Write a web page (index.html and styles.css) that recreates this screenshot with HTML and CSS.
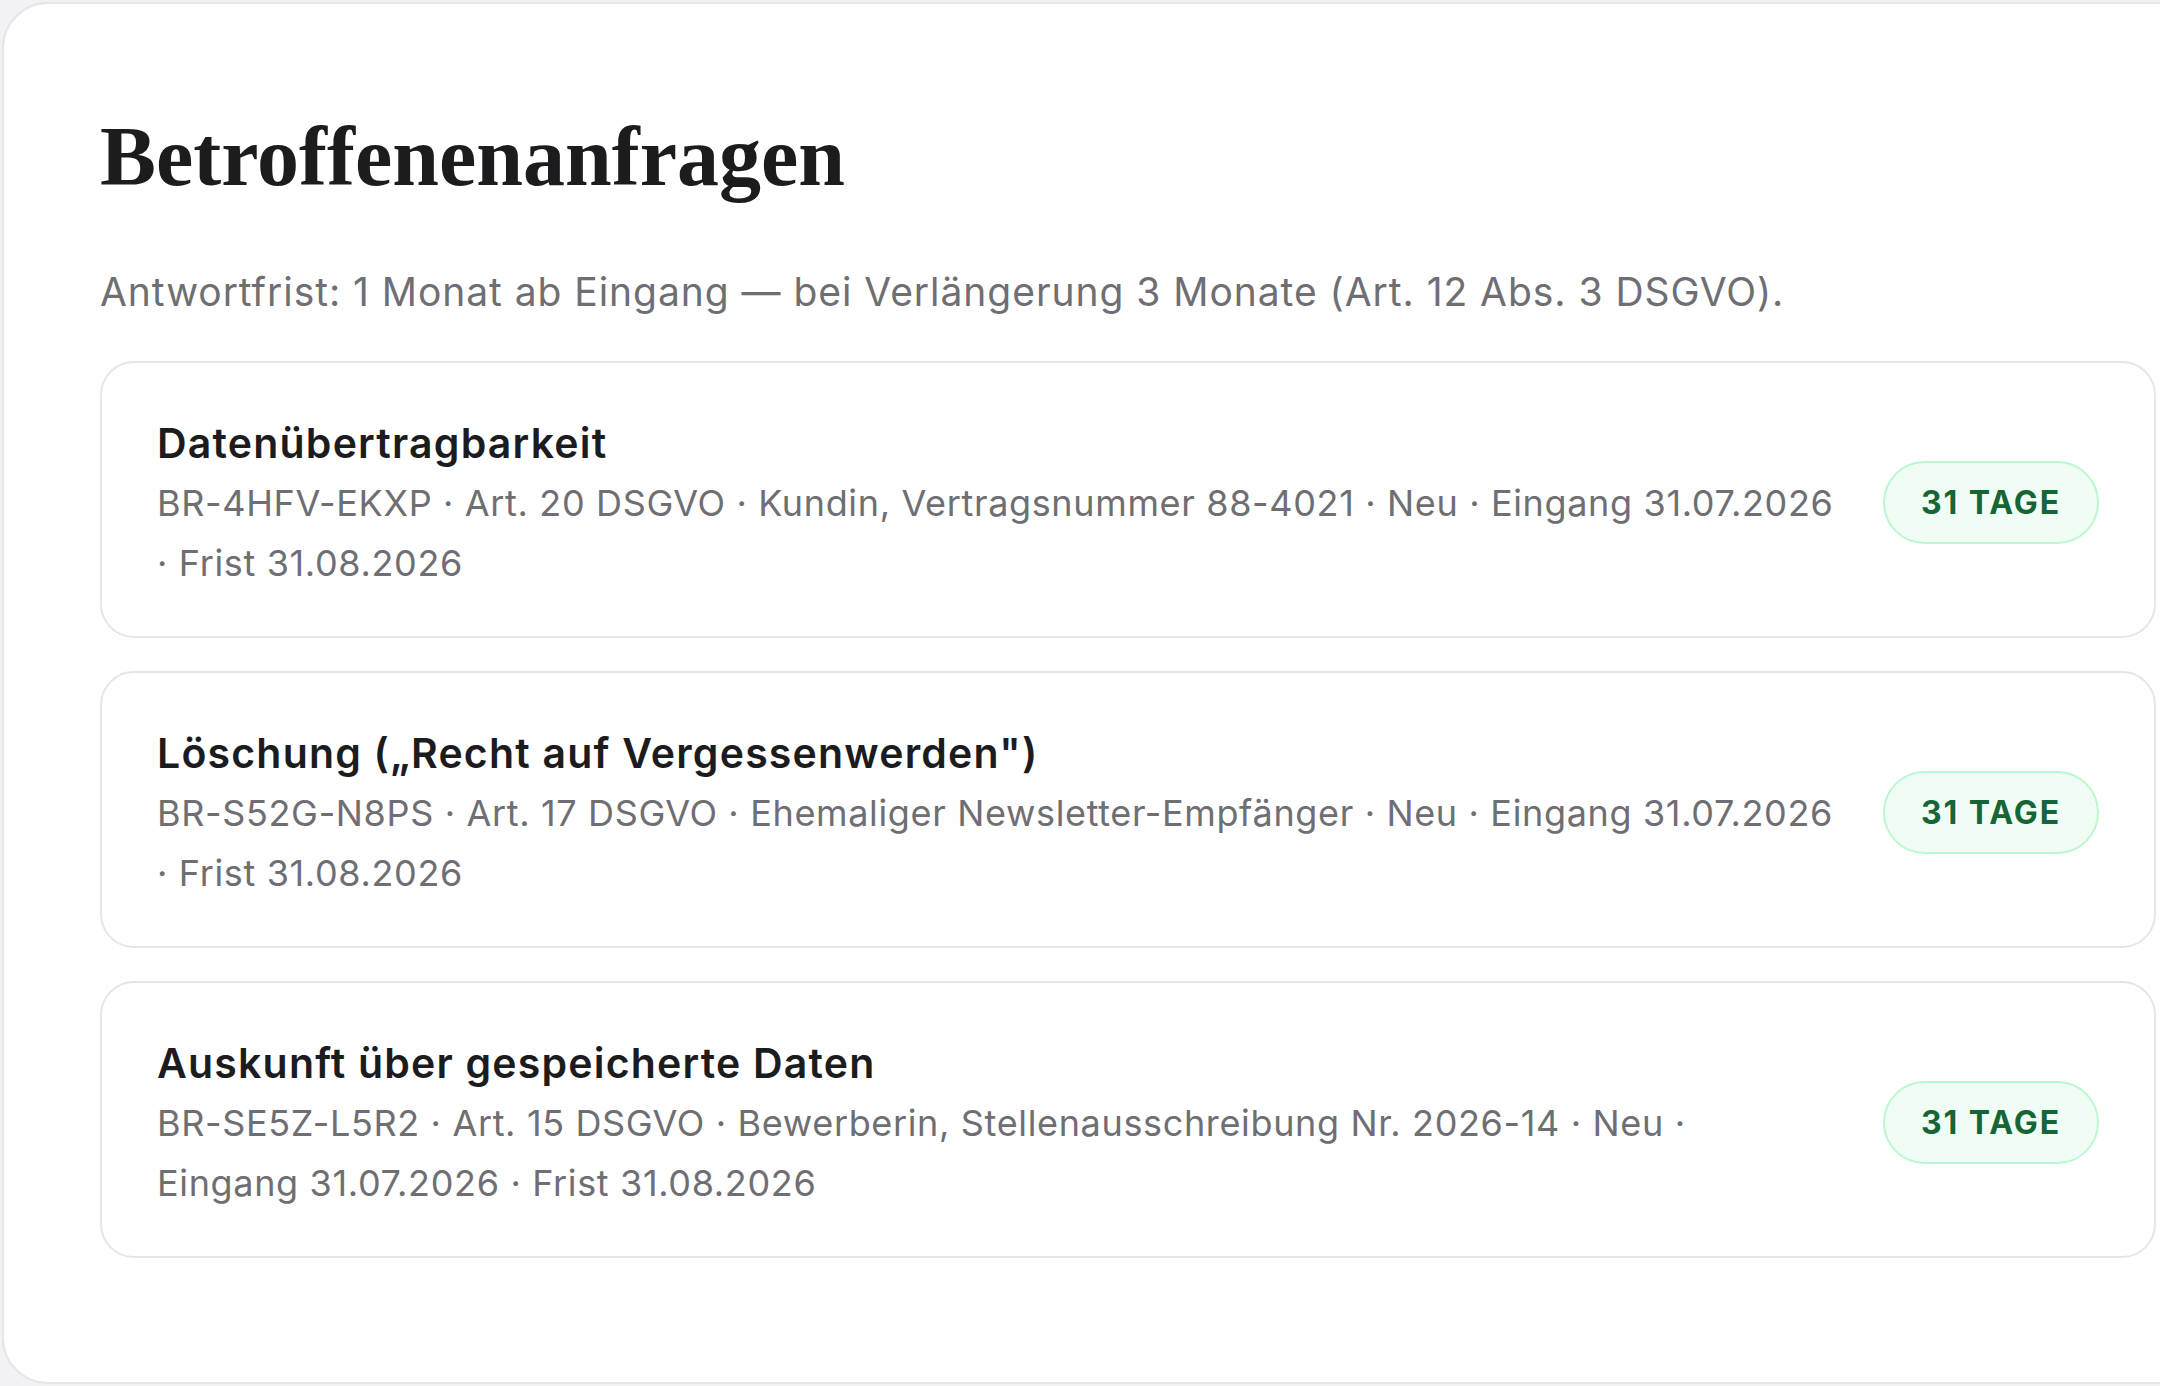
FILE: index.html
```html
<!DOCTYPE html>
<html lang="de">
<head>
    <meta charset="UTF-8">
    <title>Betroffenenanfragen</title>
    <meta name="viewport" content="width=device-width, initial-scale=1.0">
    <link rel="stylesheet" href="styles.css">
</head>
<body>
    <!-- Hauptkarte -->
    <div class="panel">
        <h1 class="panel-title">Betroffenenanfragen</h1>
        <p class="panel-note">Antwortfrist: 1 Monat ab Eingang — bei Verlängerung 3 Monate (Art. 12 Abs. 3 DSGVO).</p>

        <!-- Anfragenliste -->
        <div class="request-list">
            <div class="request">
                <div class="request-body">
                    <div class="request-title">Datenübertragbarkeit</div>
                    <div class="request-meta">BR-4HFV-EKXP · Art. 20 DSGVO · Kundin, Vertragsnummer 88-4021 · Neu · Eingang&nbsp;31.07.2026 · Frist&nbsp;31.08.2026</div>
                </div>
                <span class="badge">31 Tage</span>
            </div>

            <div class="request">
                <div class="request-body">
                    <div class="request-title">Löschung („Recht auf Vergessenwerden")</div>
                    <div class="request-meta">BR-S52G-N8PS · Art. 17 DSGVO · Ehemaliger Newsletter-Empfänger · Neu · Eingang&nbsp;31.07.2026 · Frist&nbsp;31.08.2026</div>
                </div>
                <span class="badge">31 Tage</span>
            </div>

            <div class="request">
                <div class="request-body">
                    <div class="request-title">Auskunft über gespeicherte Daten</div>
                    <div class="request-meta">BR-SE5Z-L5R2 · Art. 15 DSGVO · Bewerberin, Stellenausschreibung Nr. 2026-14 · Neu · Eingang&nbsp;31.07.2026 · Frist&nbsp;31.08.2026</div>
                </div>
                <span class="badge">31 Tage</span>
            </div>
        </div>
    </div>
</body>
</html>
```

FILE: styles.css
```css
:root {
    --page-bg: #f2f2f5;
    --card-bg: #ffffff;
    --border: #e5e5ea;
    --text: #1c1c1e;
    --muted: #6e6e73;
    --ok-bg: #f0fdf4;
    --ok-border: #bbf7d0;
    --ok-text: #166534;
}

* {
    box-sizing: border-box;
}

html, body {
    height: 100%;
}

body {
    margin: 0;
    background: var(--page-bg);
    font-family: Inter, 'Noto Sans', sans-serif;
    color: var(--text);
    overflow: hidden;
}

.panel {
    margin: 2px 0 0 2px;
    width: 2252px;
    height: 1382px;
    padding: 103px 96px 0;
    background: var(--card-bg);
    border: 2px solid var(--border);
    border-radius: 46px;
}

.panel-title {
    margin: 0;
    font-family: 'Liberation Serif', 'DejaVu Serif', serif;
    font-size: 84px;
    font-weight: 700;
    line-height: 1.2;
    color: var(--text);
}

.panel-note {
    margin: 55px 0 0;
    font-size: 39px;
    line-height: 57px;
    letter-spacing: 0.95px;
    color: var(--muted);
}

.request-list {
    margin-top: 41px;
    display: flex;
    flex-direction: column;
    gap: 33px;
}

.request {
    display: flex;
    align-items: center;
    gap: 40px;
    padding: 50px 55px 43px;
    border: 2px solid var(--border);
    border-radius: 34px;
    background: var(--card-bg);
}

.request-body {
    flex: 1;
    min-width: 0;
}

.request-title {
    font-size: 41px;
    font-weight: 600;
    line-height: 60px;
    letter-spacing: 1.2px;
    color: var(--text);
}

.request-meta {
    font-size: 36px;
    line-height: 60px;
    letter-spacing: 0.65px;
    color: var(--muted);
}

.badge {
    flex-shrink: 0;
    padding: 20px 36px;
    font-size: 32px;
    font-weight: 700;
    line-height: 39px;
    letter-spacing: 0.06em;
    text-transform: uppercase;
    color: var(--ok-text);
    background: var(--ok-bg);
    border: 2px solid var(--ok-border);
    border-radius: 999px;
}
```
